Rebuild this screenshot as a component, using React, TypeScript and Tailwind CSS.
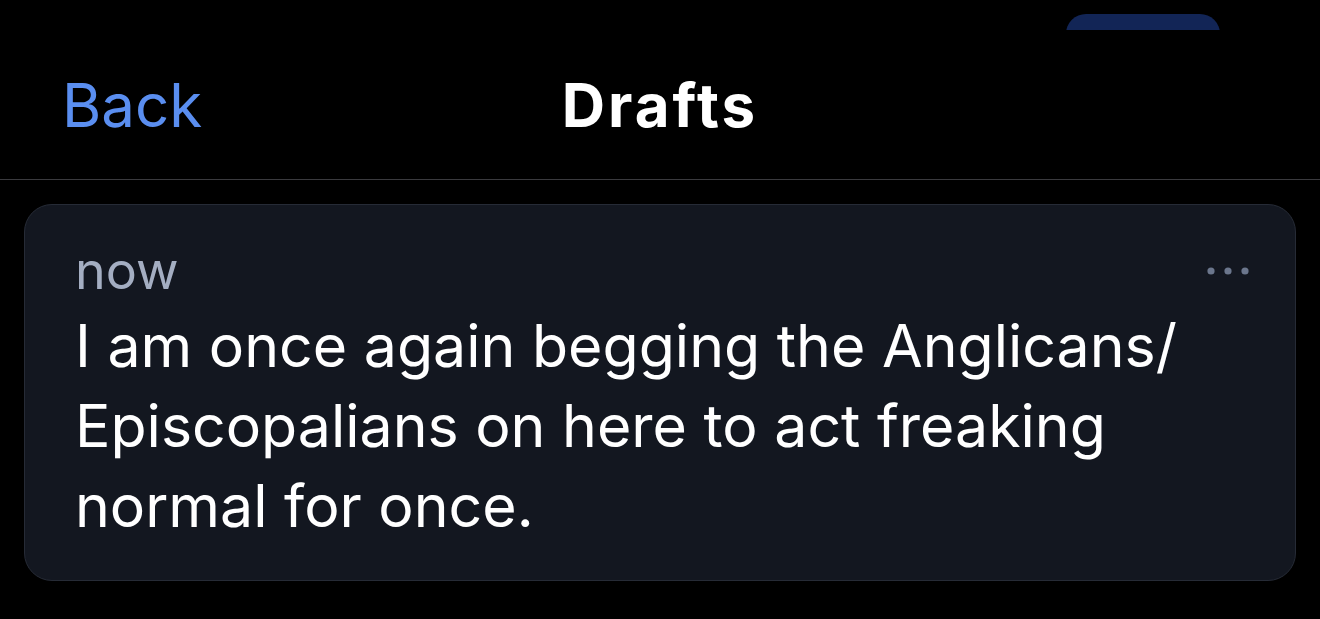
export default function App() {
  return (
    <div className="relative w-[1320px] h-[619px] overflow-hidden bg-black font-['Inter','Noto_Sans',sans-serif]">
      {/* status pill peeking above the header */}
      <div className="absolute left-[1066px] top-[14px] w-[154px] h-[16px] overflow-hidden">
        <div className="w-full h-[40px] rounded-[40px] bg-[#122556]" />
      </div>

      {/* Header */}
      <div className="relative mt-[30px] h-[150px] border-b border-[#3a3a3e] flex items-center">
        <button className="ml-[62px] text-[60px] text-[#5a8ef0] leading-none">Back</button>
        <h1 className="absolute left-0 right-0 text-center text-[60px] font-bold tracking-[0.05em] text-white leading-none pointer-events-none">
          Drafts
        </h1>
      </div>

      {/* Draft card */}
      <div className="mx-[24px] mt-[24px] h-[377px] rounded-[28px] border border-[#262b36] bg-[#131720] pl-[50px] pr-[40px] pt-[36px] relative">
        <svg className="absolute right-[45px] top-[61px]" width="44" height="10" viewBox="0 0 44 10" fill="#6b768c">
          <circle cx="5" cy="5" r="3.6" />
          <circle cx="22" cy="5" r="3.6" />
          <circle cx="39" cy="5" r="3.6" />
        </svg>
        <div className="text-[52px] leading-[60px] text-[#a4aec2]">now</div>
        <p className="mt-[5px] text-[59px] leading-[80px] text-white max-w-[1180px]">
          I am once again begging the Anglicans/ Episcopalians on here to act freaking normal for once.
        </p>
      </div>
    </div>
  );
}
